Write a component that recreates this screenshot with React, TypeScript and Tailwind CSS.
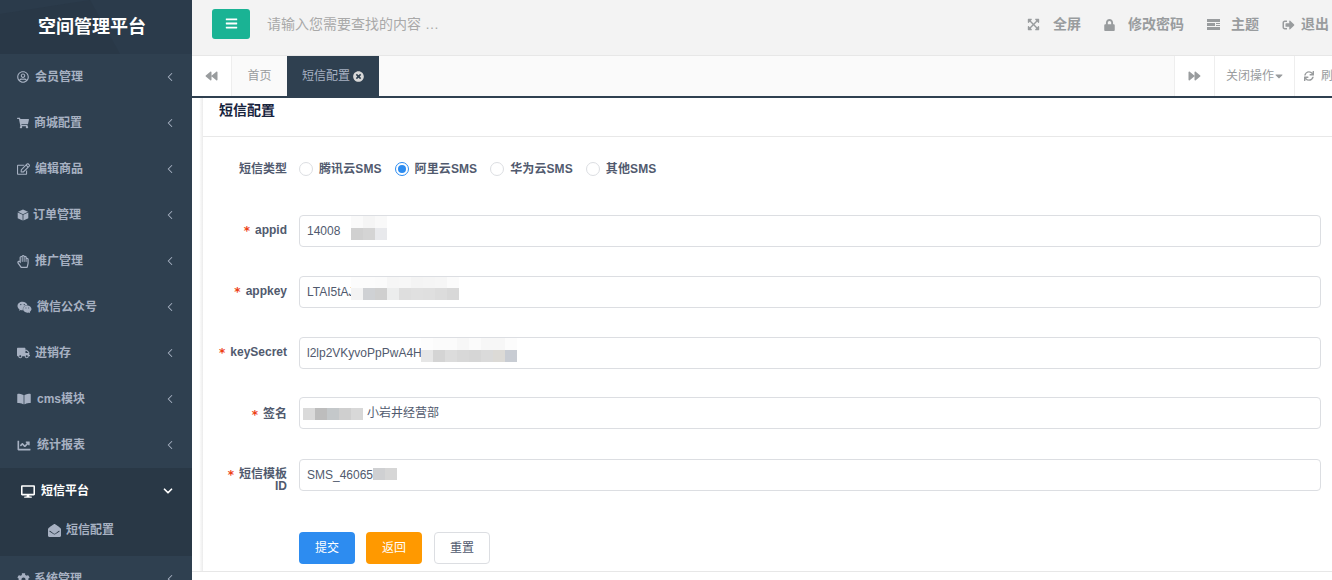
import React from 'react'
import { ChevronDown, ChevronLeft } from 'lucide-react'
import {
  FaBackward, FaBars, FaBookOpen, FaCaretDown, FaChartLine, FaCog, FaDesktop, FaEnvelopeOpen, FaExpandArrowsAlt,
  FaForward, FaLock, FaRegEdit, FaRegHandPaper, FaRegUserCircle, FaShoppingCart, FaSignOutAlt, FaSync, FaTimesCircle,
  FaTruck, FaWeixin,
} from 'react-icons/fa'

const CubeIcon = ({ className }: { className?: string }) => (
  <svg className={className} viewBox="0 0 12 12" fill="currentColor">
    <polygon points="6,0.5 11,2.8 6,5.2 1,2.8" />
    <polygon points="0.7,3.4 5.6,5.8 5.6,11.6 0.7,9.2" />
    <polygon points="11.3,3.4 6.4,5.8 6.4,11.6 11.3,9.2" />
  </svg>
)

// Theme switch icon: stacked bars with a split middle row
const ThemeIcon = ({ className }: { className?: string }) => (
  <svg className={className} viewBox="0 0 13 11" fill="currentColor">
    <rect x="0" y="0" width="13" height="3" />
    <rect x="0" y="4" width="8" height="3" />
    <rect x="9" y="4" width="4" height="1" />
    <rect x="9" y="6" width="4" height="1" />
    <rect x="0" y="8" width="13" height="3" />
  </svg>
)

const menu = [
  { label: '会员管理', icon: FaRegUserCircle, iconClass: 'w-[12px] h-[12px]', gap: 'gap-[6px]' },
  { label: '商城配置', icon: FaShoppingCart, iconClass: 'w-[12px] h-[12px]', gap: 'gap-[5px]' },
  { label: '编辑商品', icon: FaRegEdit, iconClass: 'w-[13px] h-[12px]', gap: 'gap-[5px]' },
  { label: '订单管理', icon: CubeIcon, iconClass: 'w-[12px] h-[12px]', gap: 'gap-[4px]' },
  { label: '推广管理', icon: FaRegHandPaper, iconClass: 'w-[12px] h-[13px]', gap: 'gap-[6px]' },
  { label: '微信公众号', icon: FaWeixin, iconClass: 'w-[15px] h-[13px]', gap: 'gap-[5px]' },
  { label: '进销存', icon: FaTruck, iconClass: 'w-[13px] h-[12px]', gap: 'gap-[5px]' },
  { label: 'cms模块', icon: FaBookOpen, iconClass: 'w-[14px] h-[12px]', gap: 'gap-[6px]' },
  { label: '统计报表', icon: FaChartLine, iconClass: 'w-[14px] h-[13px]', gap: 'gap-[6px]' },
]

const Sidebar = () => (
  <aside className="w-[192px] h-[580px] shrink-0 bg-[#2f4050] overflow-hidden flex flex-col">
    <div className="relative h-[54px] shrink-0 bg-[#2b3b4b] overflow-hidden flex items-center justify-center">
      <svg className="absolute inset-0" width="192" height="54" viewBox="0 0 192 54">
        <polygon points="0,14 90,0 120,54 0,54" fill="#293847" />
      </svg>
      <h1 className="relative pr-[8px] text-[18px] leading-[24px] font-bold text-white">空间管理平台</h1>
    </div>
    {menu.map(({ label, icon: Icon, iconClass, gap }) => (
      <div key={label} className="h-[46px] shrink-0 flex items-center pl-[17px] pr-[15px] text-[12px] font-bold text-[#a7b1c2]">
        <div className={`flex flex-1 items-center ${gap}`}>
          <Icon className={iconClass} />
          <span>{label}</span>
        </div>
        <ChevronLeft className="w-[14px] h-[14px]" strokeWidth={1.8} />
      </div>
    ))}
    <div className="h-[88px] shrink-0 bg-[#293846]">
      <div className="h-[46px] flex items-center pl-[21px] pr-[17px] text-[12px] font-bold text-white">
        <div className="flex flex-1 items-center gap-[6px]">
          <FaDesktop className="w-[14px] h-[13px]" />
          <span>短信平台</span>
        </div>
        <ChevronDown className="w-[14px] h-[14px]" strokeWidth={3} />
      </div>
      <div className="h-[32px] flex items-center gap-[5px] pl-[48px] text-[12px] font-bold text-[#a7b1c2]">
        <FaEnvelopeOpen className="w-[13px] h-[13px]" />
        <span>短信配置</span>
      </div>
    </div>
    <div className="h-[46px] shrink-0 flex items-center pl-[17px] pr-[15px] text-[12px] font-bold text-[#a7b1c2]">
      <div className="flex flex-1 items-center gap-[4px]">
        <FaCog className="w-[13px] h-[13px]" />
        <span>系统管理</span>
      </div>
      <ChevronLeft className="w-[14px] h-[14px]" strokeWidth={1.8} />
    </div>
  </aside>
)

const actions = [
  { label: '全屏', icon: FaExpandArrowsAlt, iconClass: 'w-[13px] h-[13px]', width: 'w-[77px]', gap: 'gap-[13px]' },
  { label: '修改密码', icon: FaLock, iconClass: 'w-[11px] h-[12px]', width: 'w-[103px]', gap: 'gap-[13px]' },
  { label: '主题', icon: ThemeIcon, iconClass: 'w-[13px] h-[11px]', width: 'w-[75px]', gap: 'gap-[11px]' },
  { label: '退出', icon: FaSignOutAlt, iconClass: 'w-[13px] h-[12px]', width: 'w-[50px]', gap: 'gap-[6px]' },
]

const Topbar = () => (
  <header className="h-[56px] shrink-0 bg-[#f3f3f3] border-b border-[#e7e7e7] flex items-center pl-[20px]">
    <button className="w-[38px] h-[30px] -mt-[8px] rounded-[3px] bg-[#1ab394] text-white flex items-center justify-center">
      <FaBars className="w-[13px] h-[13px]" />
    </button>
    <span className="ml-[17px] -mt-[6px] flex-1 text-[14px] text-[#a9a9a9]">请输入您需要查找的内容 …</span>
    <div className="flex items-center -mt-[6px] text-[14px] font-bold text-[#999c9e]">
      {actions.map(({ label, icon: Icon, iconClass, width, gap }) => (
        <div key={label} className={`flex items-center ${width} ${gap}`}>
          <Icon className={`shrink-0 ${iconClass}`} />
          <span className="whitespace-nowrap">{label}</span>
        </div>
      ))}
    </div>
  </header>
)

const Tabs = () => (
  <nav className="h-[42px] shrink-0 bg-[#fafafa] border-b-2 border-[#2f4050] flex text-[12px] text-[#999c9e]">
    <div className="w-[40px] bg-white border-r border-[#eee] flex items-center justify-center">
      <FaBackward className="w-[13px] h-[12px]" />
    </div>
    <div className="w-[55px] flex items-center justify-center">首页</div>
    <div className="w-[92px] bg-[#2f4050] text-[#a7b1c2] flex items-center justify-center gap-[3px]">
      短信配置
      <FaTimesCircle className="w-[11px] h-[11px] text-[#d8d8d8]" />
    </div>
    <div className="flex-1" />
    <div className="w-[40px] bg-white border-l border-[#eee] flex items-center justify-center">
      <FaForward className="w-[13px] h-[12px]" />
    </div>
    <div className="w-[80px] bg-white border-l border-[#eee] flex items-center justify-center gap-[1px]">
      关闭操作
      <FaCaretDown className="w-[8px] h-[12px]" />
    </div>
    <div className="w-[38px] shrink-0 bg-white border-l border-[#eee] flex items-center gap-[7px] pl-[9px] overflow-hidden whitespace-nowrap">
      <FaSync className="w-[10px] h-[10px] shrink-0" />
      刷新
    </div>
  </nav>
)

// Pixelated cover over private values, laid over the field in rows of 12px cells
const Mosaic = ({ left, top, rows }: { left: number; top: number; rows: string[][] }) => (
  <div className="absolute" style={{ left, top }}>
    {rows.map((row, i) => (
      <div key={i} className="flex">
        {row.map((color, j) => (
          <span key={j} className="block w-[12px] h-[12px]" style={{ backgroundColor: color }} />
        ))}
      </div>
    ))}
  </div>
)

const fields = [
  {
    label: 'appid', value: '14008', labelClass: 'pl-[20px] pt-[9px]', rowClass: '',
    mosaic: { left: 51, top: 0, rows: [['#fafafa', '#f5f5f5', '#f9f9f9'], ['#d0d0d0', '#d4d4d4', '#e8e9ec']] },
  },
  {
    label: 'appkey', value: 'LTAI5tAJ', labelClass: 'pl-[20px] pt-[9px]', rowClass: '',
    mosaic: { left: 51, top: -1, rows: [['#fcfcfc', '#fcfcfc', '#fbfbfb', '#f6f6f6', '#f7f7f7', '#f4f4f4', '#f5f5f5', '#f6f6f6', '#fbfbfb'], ['#f3f3f3', '#cfd1d4', '#cfcfcf', '#eceded', '#dedede', '#e0e0e0', '#dfdfdf', '#dcdcdc', '#d8d8d8']] },
  },
  {
    label: 'keySecret', value: 'l2lp2VKyvoPpPwA4H', labelClass: 'pl-[20px] pt-[9px]', rowClass: '',
    mosaic: { left: 121, top: 0, rows: [['#fdfdfd', '#fbfbfb', '#fbfbfb', '#f7f7f7', '#fbfbfb', '#f7f7f7', '#f7f7f7', '#fcfcfc'], ['#e6e6e6', '#d4d4d4', '#dcdcdc', '#d8d8d8', '#d6d6d6', '#dadada', '#dcdad6', '#c8ccd3']] },
  },
  {
    label: '签名', value: '　　　　　小岩井经营部', labelClass: 'pl-[20px] pt-[11px]', rowClass: '-mt-[1px] mb-[1px]',
    mosaic: { left: 3, top: 10, rows: [['#dadada', '#bdbdbd', '#c4c8ca', '#cfcfcf', '#d8d8d8']] },
  },
  {
    label: '短信模板ID', value: 'SMS_46065', labelClass: 'pl-[29px] pt-[9px]', rowClass: '',
    mosaic: { left: 73, top: 8, rows: [['#cfd0d2', '#d6d6d6']] },
  },
]

const radios = ['腾讯云SMS', '阿里云SMS', '华为云SMS', '其他SMS']

const Form = () => (
  <main className="flex-1 min-h-0 flex flex-col overflow-hidden">
    <div className="flex-1 min-h-0 flex overflow-hidden">
      <div className="w-[11px] shrink-0 bg-linear-to-r from-white from-[65%] to-[#ebebeb]" />
      <div className="flex-1 min-w-0">
        <div className="h-[39px] border-b border-[#e8e8e8] pl-[16px] pt-[2px] text-[14px] leading-[20px] font-bold text-[#17233d]">短信配置</div>
        <form className="text-[12px] text-[#515a6e]">
          <div className="h-[32px] mt-[16px] -ml-[11px] flex items-center">
            <label className="w-[95px] text-right font-bold">短信类型</label>
            <div className="ml-[12px] flex items-center gap-[13px] font-bold tracking-[0.1px]">
              {radios.map((radio, i) => (
                <span key={radio} className="flex items-center gap-[6px]">
                  <span className={`w-[14px] h-[14px] rounded-full border bg-white flex items-center justify-center ${i === 1 ? 'border-[#2d8cf0]' : 'border-[#dcdee2]'}`}>
                    {i === 1 && <span className="w-[8px] h-[8px] rounded-full bg-[#2d8cf0]" />}
                  </span>
                  {radio}
                </span>
              ))}
            </div>
          </div>
          <div className="mt-[30px] -ml-[11px] flex flex-col gap-[29px]">
            {fields.map(({ label, value, labelClass, rowClass, mosaic }) => (
              <div key={label} className={`h-[32px] flex ${rowClass}`}>
                <label className={`w-[95px] text-right font-bold leading-[12px] ${labelClass}`}>
                  <span className="inline-block translate-y-[1px] mr-[5px] font-['DejaVu_Sans'] text-[#ed4014]">*</span>
                  {label}
                </label>
                <div className="relative ml-[12px] w-[1022px] h-[32px] border border-[#dcdee2] rounded-[4px] bg-white overflow-hidden px-[7px] flex items-center whitespace-nowrap">
                  {value}
                  <Mosaic {...mosaic} />
                </div>
              </div>
            ))}
          </div>
          <div className="mt-[41px] ml-[96px] flex gap-[11px]">
            <button type="button" className="w-[56px] h-[32px] rounded-[4px] bg-[#2d8cf0] text-white">提交</button>
            <button type="button" className="w-[56px] h-[32px] rounded-[4px] bg-[#ff9900] text-white">返回</button>
            <button type="button" className="w-[56px] h-[32px] ml-[1px] rounded-[4px] border border-[#dcdee2] bg-white">重置</button>
          </div>
        </form>
      </div>
    </div>
    <div className="h-[9px] shrink-0 bg-white border-t border-[#e7e7e7]" />
  </main>
)

export default function App() {
  return (
    <div className="w-[1332px] h-[580px] flex overflow-hidden bg-white font-['Liberation_Sans','Noto_Sans_CJK_SC',sans-serif]">
      <Sidebar />
      <div className="flex-1 min-w-0 flex flex-col">
        <Topbar />
        <Tabs />
        <Form />
      </div>
    </div>
  )
}
